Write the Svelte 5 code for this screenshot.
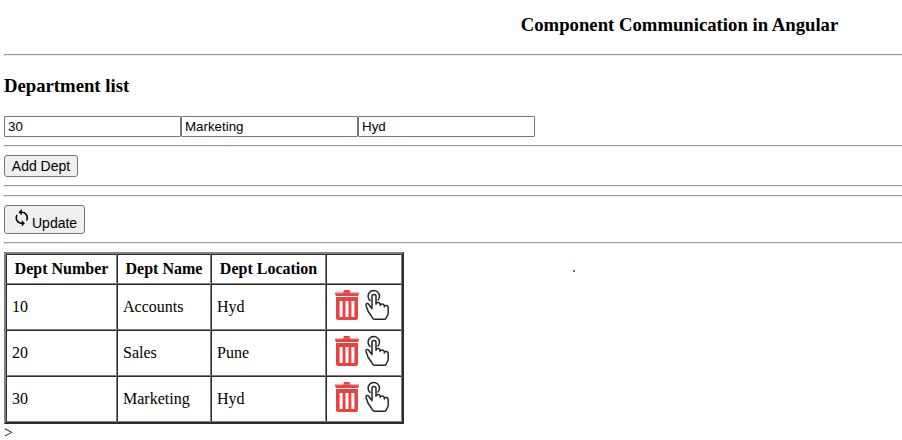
<script>
  let number = $state('30');
  let name = $state('Marketing');
  let location = $state('Hyd');

  const departments = [
    { number: 10, name: 'Accounts', location: 'Hyd' },
    { number: 20, name: 'Sales', location: 'Pune' },
    { number: 30, name: 'Marketing', location: 'Hyd' }
  ];
</script>

<div class="viewport">
  <main>
    <h3 class="title">Component Communication in Angular</h3>
    <hr class="first" />
    <h3 class="subtitle">Department list</h3>
    <div class="fields">
      <input type="text" bind:value={number} aria-label="Dept Number" />
      <input type="text" bind:value={name} aria-label="Dept Name" />
      <input type="text" bind:value={location} aria-label="Dept Location" />
    </div>
    <hr />
    <button class="add">Add Dept</button>
    <hr />
    <hr />
    <button class="update">
      <svg class="sync" width="20" height="20" viewBox="-.4 -.4 25.4 25.4" aria-hidden="true">
        <path d="M12 4V1L8 5l4 4V6c3.31 0 6 2.69 6 6 0 1.01-.25 1.97-.7 2.8l1.46 1.46C19.54 15.03 20 13.57 20 12c0-4.42-3.58-8-8-8zm0 14c-3.31 0-6-2.69-6-6 0-1.01.25-1.97.7-2.8L5.24 7.74C4.46 8.97 4 10.43 4 12c0 4.42 3.58 8 8 8v3l4-4-4-4v3z" />
      </svg>
      <span>Update</span>
    </button>
    <hr />
    <table>
      <thead>
        <tr>
          <th class="c1">Dept Number</th>
          <th class="c2">Dept Name</th>
          <th class="c3">Dept Location</th>
          <th class="c4"></th>
        </tr>
      </thead>
      <tbody>
        {#each departments as dept}
          <tr>
            <td>{dept.number}</td>
            <td>{dept.name}</td>
            <td>{dept.location}</td>
            <td>
              <div class="actions">
                <svg width="26" height="32" viewBox="0 0 26 32" aria-label="Delete">
                  <path fill="#e84340" d="M10 1h5.5l.8 2.4H9.2z" />
                  <path fill="#ee7774" d="M1 3.4h24v2H1z" />
                  <path fill="#e84340" d="M9 3.4h7.6v2H9zM1 4.4h24L24 7H2z" />
                  <path fill="#e84340" fill-rule="evenodd" d="M2 8h22V29q0 2-2 2H4q-2 0-2-2zM5.6 12v16h3V12zm5.9 0v16h3V12zm5.9 0v16h3V12z" />
                </svg>
                <svg class="hand" width="26" height="32" viewBox="0 0 26 32" aria-label="Select">
                  <path d="M6 11.4A5.7 5.7 0 1 1 14 11M8 18.6V7.4a2 2 0 0 1 4 0v7.4M12 15.3v-1.1q2.9-1.6 4.2.6v1.8M16.2 15.6q2.8-1.4 4.1.7V18M20.3 16.8q3.8-1.1 3.9 1.8v5.4q0 2.3-1.5 3.8l-.5 1.3q-.4 1.1-1.6 1.1H10.4q-1.3 0-1.8-1L7.4 27 4.2 22.5 2.2 17q-.8-2.7 1.4-2.4 1.3.3 1.9 2l2.5 3" />
                </svg>
              </div>
            </td>
          </tr>
        {/each}
      </tbody>
    </table>
    <div class="tail">&gt;</div>
    <span class="speck"></span>
  </main>
</div>

<style>
  .viewport {
    width: 100%;
    height: 440px;
    overflow: hidden;
    background: #fff;
    color: #000;
    font: 16px/18px "Liberation Serif", "Times New Roman", serif;
  }
  main {
    box-sizing: border-box;
    width: 1355px;
    padding-left: 4px;
  }
  h3 {
    margin: 0;
    font-size: 18.72px;
    line-height: 22px;
    font-weight: 700;
  }
  .title {
    padding: 14px 0 18px;
    text-align: center;
  }
  .subtitle {
    padding: 19px 0;
  }
  hr {
    box-sizing: border-box;
    height: 2px;
    margin: 8px 0;
    border: 1px solid;
    border-color: #9a9a9a #eee #eee #9a9a9a;
  }
  hr.first {
    margin: 0;
  }
  .fields {
    display: flex;
  }
  input {
    box-sizing: border-box;
    width: 177px;
    height: 21px;
    margin: 0;
    padding: 1px 3px;
    border: 1px solid #767676;
    border-radius: 1px;
    background: #fff;
    color: #000;
    font: 13.333px "Liberation Sans", Arial, sans-serif;
  }
  button {
    box-sizing: border-box;
    display: flex;
    margin: 0;
    border: 1px solid #767676;
    border-radius: 3px;
    background: #efefef;
    color: #000;
    font: 14px/20px "Liberation Sans", Arial, sans-serif;
  }
  .add {
    width: 74px;
    height: 22px;
    padding: 0;
    justify-content: center;
  }
  .update {
    width: 81px;
    height: 29px;
    padding: 2px 0 0 7px;
  }
  .update span {
    padding-top: 5px;
  }
  .sync {
    flex: none;
  }
  table {
    table-layout: fixed;
    width: 400px;
    border: 2px solid;
    border-color: #808080 #2c2c2c #2c2c2c #808080;
    border-spacing: 0;
    border-collapse: separate;
  }
  th,
  td {
    box-sizing: border-box;
    border: 1px solid;
    border-color: #2c2c2c #808080 #808080 #2c2c2c;
    padding: 0 5px;
  }
  th {
    height: 30px;
    text-align: center;
    white-space: nowrap;
  }
  td {
    height: 46px;
  }
  .c1 {
    width: 111px;
  }
  .c2 {
    width: 94px;
  }
  .c3 {
    width: 115px;
  }
  .c4 {
    width: 76px;
  }
  .actions {
    display: flex;
    gap: 4px;
    height: 36px;
    padding-left: 2px;
  }
  .hand path {
    fill: none;
    stroke: #252525;
    stroke-width: 1.5;
    stroke-linecap: round;
    stroke-linejoin: round;
  }
  .speck {
    position: absolute;
    left: 572.5px;
    top: 269.5px;
    width: 2px;
    height: 2px;
    border-radius: 1px;
    background: #2222f0;
  }
</style>
